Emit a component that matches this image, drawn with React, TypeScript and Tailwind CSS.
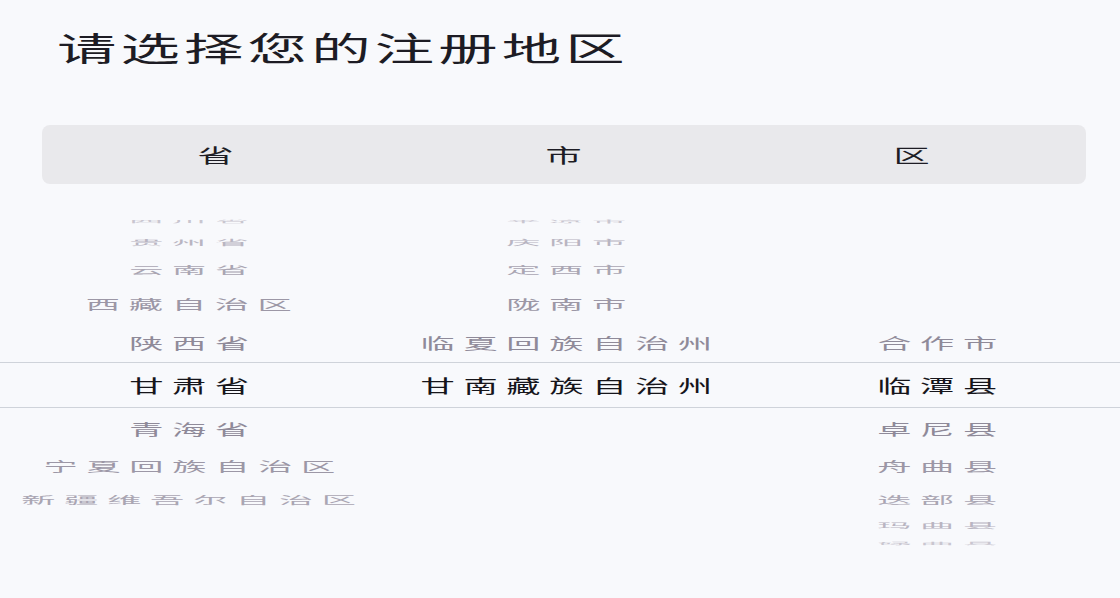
import React from 'react';

type Row = {
  h: string;
  scale: string;
  color: string;
  cells: [string, string, string];
  selected?: boolean;
};

// wheel slots, top to bottom; farther from the centre = flatter and paler
const rows: Row[] = [
  { h: 'h-[18px]', scale: 'scale-y-[0.22]', color: 'text-[#c9c6d0]', cells: ['四川省', '平凉市', ''] },
  { h: 'h-[24px]', scale: 'scale-y-[0.4]', color: 'text-[#b9b5c2]', cells: ['贵州省', '庆阳市', ''] },
  { h: 'h-[30px]', scale: 'scale-y-[0.58]', color: 'text-[#aaa6b3]', cells: ['云南省', '定西市', ''] },
  { h: 'h-[37px]', scale: 'scale-y-[0.72]', color: 'text-[#9c97a6]', cells: ['西藏自治区', '陇南市', ''] },
  { h: 'h-[41px]', scale: 'scale-y-[0.84]', color: 'text-[#8f8a99]', cells: ['陕西省', '临夏回族自治州', '合作市'] },
  { h: 'h-[46px]', scale: 'scale-y-100', color: 'text-[#16151b]', cells: ['甘肃省', '甘南藏族自治州', '临潭县'], selected: true },
  { h: 'h-[39px]', scale: 'scale-y-[0.84]', color: 'text-[#8f8a99]', cells: ['青海省', '', '卓尼县'] },
  { h: 'h-[36px]', scale: 'scale-y-[0.72]', color: 'text-[#9c97a6]', cells: ['宁夏回族自治区', '', '舟曲县'] },
  { h: 'h-[31px]', scale: 'scale-y-[0.58]', color: 'text-[#aaa6b3]', cells: ['新疆维吾尔自治区', '', '迭部县'] },
  { h: 'h-[22px]', scale: 'scale-y-[0.4]', color: 'text-[#b9b5c2]', cells: ['', '', '玛曲县'] },
  { h: 'h-[14px]', scale: 'scale-y-[0.22]', color: 'text-[#c9c6d0]', cells: ['', '', '碌曲县'] },
];

const colWidths = ['w-[378px]', 'w-[376px]', 'flex-1'];

export default function App() {
  return (
    <div className="w-full h-[598px] overflow-hidden bg-[#f8f9fc] font-['Noto_Sans_CJK_SC','Noto_Sans',sans-serif]">
      {/* Title */}
      <div className="pt-[27px] pl-[57px]">
        <h1 className="inline-block origin-left scale-x-[1.8] text-[33px] leading-[40px] tracking-[2.3px] font-normal text-[#1d1c24] whitespace-nowrap">
          请选择您的注册地区
        </h1>
      </div>

      {/* Column header bar */}
      <div className="mt-[58px] ml-[42px] mr-[34px] h-[59px] rounded-lg bg-[#e9e9ec] grid grid-cols-3 items-center">
        {['省', '市', '区'].map((label) => (
          <div key={label} className="flex justify-center">
            <span className="inline-block scale-x-[1.9] text-[19px] leading-none text-[#1d1c24]">{label}</span>
          </div>
        ))}
      </div>

      {/* Picker wheel */}
      <div className="mt-[28px] flex flex-col">
        {rows.map((row, i) => (
          <div
            key={i}
            className={`flex ${row.h} ${row.selected ? 'border-y border-[#cfd3da]' : ''}`}
          >
            {row.cells.map((text, j) => (
              <div key={j} className={`${colWidths[j]} flex items-center justify-center overflow-visible`}>
                {text && (
                  <span
                    className={`inline-block whitespace-nowrap scale-x-[1.9] ${row.scale} text-[18px] leading-none tracking-[4.6px] pl-[4.6px] font-normal ${row.color}`}
                  >
                    {text}
                  </span>
                )}
              </div>
            ))}
          </div>
        ))}
      </div>
    </div>
  );
}
